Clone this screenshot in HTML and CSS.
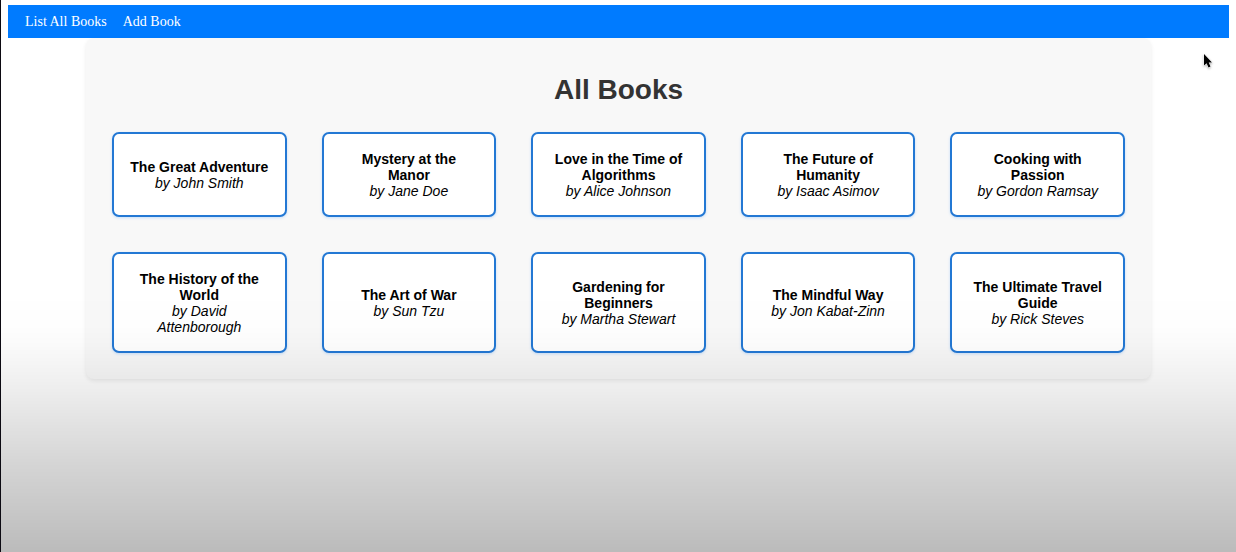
FILE: index.html
```html
<!DOCTYPE html>
<html lang="en">
<head>
<meta charset="utf-8">
<title>All Books</title>
<meta name="viewport" content="width=device-width, initial-scale=1">
<link rel="stylesheet" href="styles.css">
</head>
<body>
<nav class="navbar">
  <a href="#books">List All Books</a>
  <a href="#add">Add Book</a>
</nav>
<main class="container" id="books">
  <h1 class="title">All Books</h1>
  <ul class="book-grid">
    <li class="book"><strong>The Great Adventure</strong><em>by John Smith</em></li>
    <li class="book"><strong>Mystery at the Manor</strong><em>by Jane Doe</em></li>
    <li class="book"><strong>Love in the Time of Algorithms</strong><em>by Alice Johnson</em></li>
    <li class="book"><strong>The Future of Humanity</strong><em>by Isaac Asimov</em></li>
    <li class="book"><strong>Cooking with Passion</strong><em>by Gordon Ramsay</em></li>
    <li class="book"><strong>The History of the World</strong><em>by David Attenborough</em></li>
    <li class="book"><strong>The Art of War</strong><em>by Sun Tzu</em></li>
    <li class="book"><strong>Gardening for Beginners</strong><em>by Martha Stewart</em></li>
    <li class="book"><strong>The Mindful Way</strong><em>by Jon Kabat-Zinn</em></li>
    <li class="book"><strong>The Ultimate Travel Guide</strong><em>by Rick Steves</em></li>
  </ul>
</main>
<div class="shade"></div>
<svg class="cursor" width="12" height="18" viewBox="0 0 12 18" aria-hidden="true">
  <path d="M2 2V13.500L4.600 11.200L6.500 15.500L8.500 14.600L6.700 10.500H10Z" fill="#000" stroke="#fff" stroke-width="1" paint-order="stroke"/>
</svg>
</body>
</html>
```

FILE: styles.css
```css
* {
  box-sizing: border-box;
}

body {
  margin: 0;
  min-height: 100vh;
  padding: 5px 7px 8px;
  border-left: 1px solid #0c0a12;
  background: #fff;
  font-family: "Liberation Sans", Arial, sans-serif;
  font-size: 14px;
  line-height: 16px;
}

.navbar {
  display: flex;
  gap: 16px;
  padding: 9px 17px 8px;
  background: #007bff;
  font-family: "Liberation Serif", "Times New Roman", serif;
}

.navbar a {
  color: #fff;
  text-decoration: none;
}

.container {
  max-width: 1065px;
  margin: 0 auto;
  padding: 36px 26px 26px;
  border-radius: 8px;
  background: #f8f8f8;
  box-shadow: 0 2px 4px rgba(0, 0, 0, 0.08);
}

.title {
  margin: 0 0 26px;
  color: #333;
  font-size: 28px;
  line-height: 32px;
  text-align: center;
}

.book-grid {
  display: grid;
  grid-template-columns: repeat(5, 1fr);
  gap: 35px;
  margin: 0;
  padding: 0;
  list-style: none;
}

.book {
  display: flex;
  flex-direction: column;
  justify-content: center;
  padding: 17px 16px 16px;
  border: 2px solid #2378d4;
  border-radius: 7px;
  background: #fff;
  box-shadow: 0 1px 3px rgba(0, 123, 255, 0.2);
  color: #000;
  text-align: center;
}

.shade {
  position: fixed;
  inset: 50% 0 0 1px;
  background: linear-gradient(rgba(0, 0, 0, 0), rgba(0, 0, 0, 0.005) 18%, rgba(0, 0, 0, 0.02) 25%, rgba(0, 0, 0, 0.06) 38%, rgba(0, 0, 0, 0.165) 68%, rgba(0, 0, 0, 0.265));
  pointer-events: none;
}

.cursor {
  position: absolute;
  top: 52px;
  right: 22px;
  filter: drop-shadow(0 1px 1px rgba(0, 0, 0, 0.3));
}
```
